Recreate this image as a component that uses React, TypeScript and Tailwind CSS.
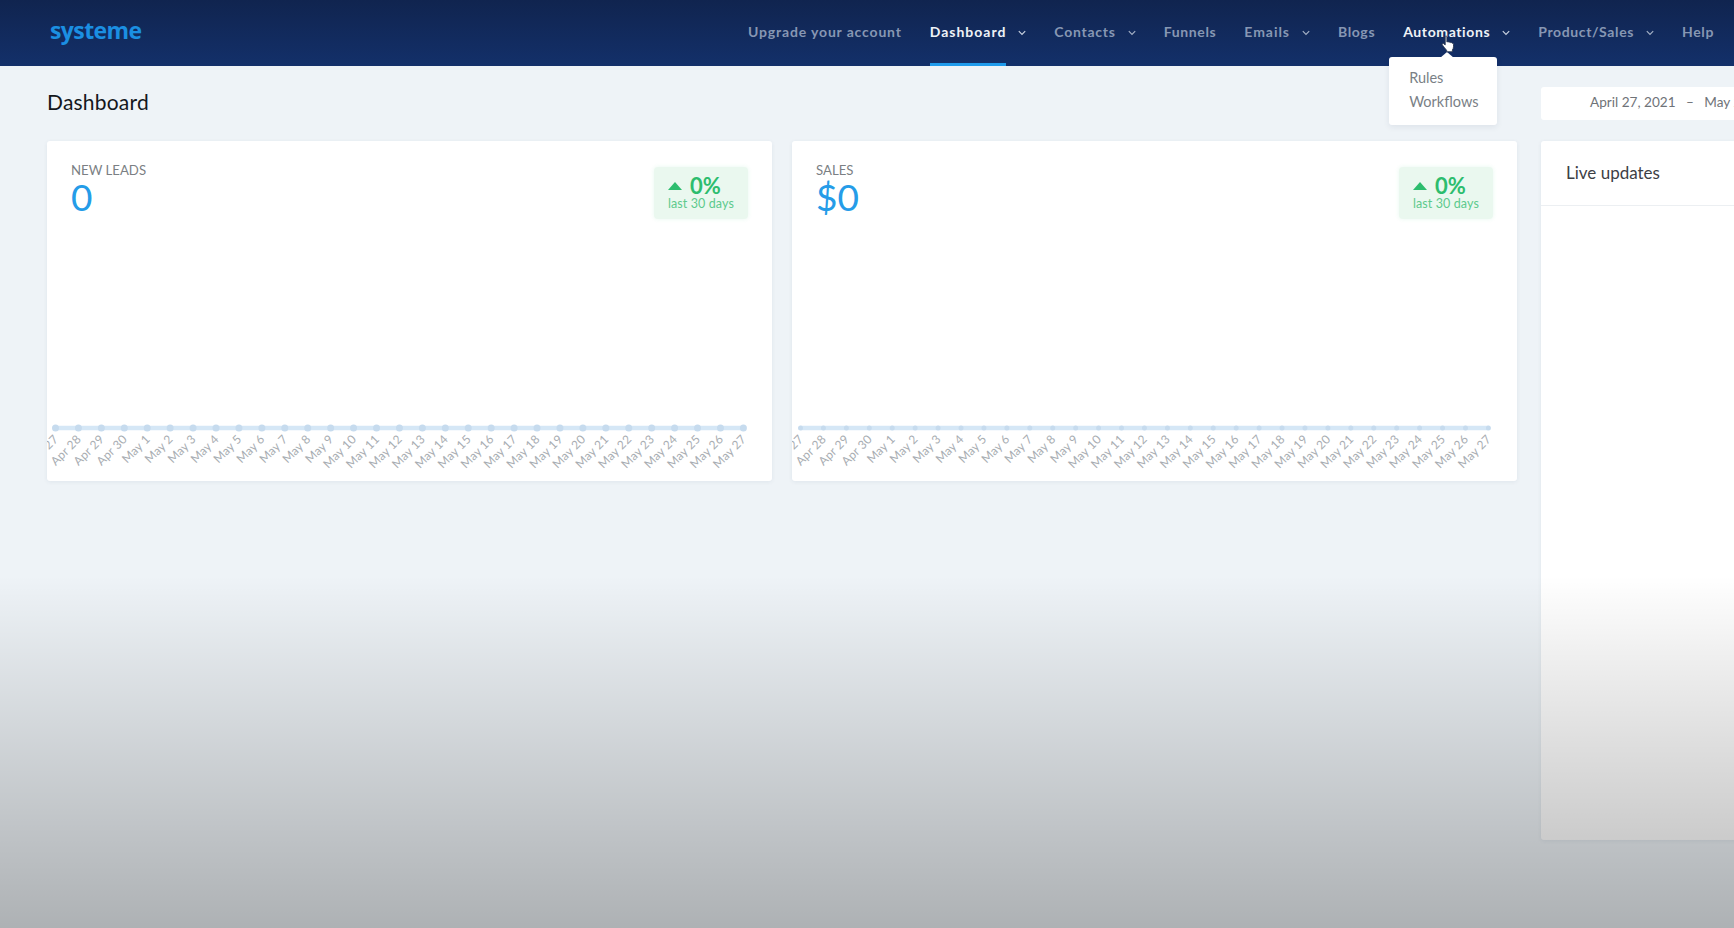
import React from "react";

const SANS = "font-['Lato','Noto_Sans',sans-serif]";

function Chevron() {
  return (
    <svg width="8" height="6" viewBox="0 0 8 6" className="ml-3" fill="none">
      <path d="M0.8 1.2 L4 4.4 L7.2 1.2" stroke="currentColor" strokeWidth="1.2" />
    </svg>
  );
}

const NAV: { label: string; track: string; chevron?: boolean; active?: boolean; open?: boolean }[] = [
  { label: "Upgrade your account", track: "tracking-[0.84px]" },
  { label: "Dashboard", track: "tracking-[0.98px]", chevron: true, active: true },
  { label: "Contacts", track: "tracking-[0.75px]", chevron: true },
  { label: "Funnels", track: "tracking-[0.62px]" },
  { label: "Emails", track: "tracking-[0.95px]", chevron: true },
  { label: "Blogs", track: "tracking-[0.62px]" },
  { label: "Automations", track: "tracking-[0.62px]", chevron: true, open: true },
  { label: "Product/Sales", track: "tracking-[0.62px]", chevron: true },
  { label: "Help", track: "tracking-[0.62px]" },
];

function Header() {
  return (
    <header className="h-[66px] shrink-0 flex items-center justify-between pl-[50px] pr-5 bg-gradient-to-b from-[#10244f] to-[#13306a]">
      <div className="font-['Open_Sans',sans-serif] font-bold text-[23px] leading-none tracking-[-0.6px] text-[#1b8fe2] -mt-[6px]">
        systeme
      </div>
      <nav className="flex h-full items-stretch gap-[28px]">
        {NAV.map((n) => (
          <div key={n.label} className="relative flex items-center">
            <div className="relative flex h-full items-center">
              <span
                className={`-mt-[4px] text-[14px] font-bold ${n.track} ${
                  n.active || n.open ? "text-[#eef2f7]" : "text-[#8797b3]"
                }`}
              >
                {n.label}
              </span>
              {n.active && <span className="absolute left-0 right-0 bottom-0 h-[3px] bg-[#1f9bec]" />}
            </div>
            {n.chevron && (
              <span className={n.active || n.open ? "text-[#c9d2e0]" : "text-[#a4b0c5]"}>
                <Chevron />
              </span>
            )}
            {n.open && <Dropdown />}
          </div>
        ))}
      </nav>
    </header>
  );
}

function Dropdown() {
  return (
    <>
      <div className="absolute z-20 left-[-14px] top-[57px] w-[108px] h-[68px] rounded-[3px] bg-white shadow-[0_2px_6px_rgba(20,40,80,0.08)] pl-5 pt-[11px] flex flex-col gap-[4px] text-[14.5px] leading-[20px] text-[#7a7f86] font-normal">
        <span className="absolute left-[58px] -top-[5px] -ml-[7px] w-0 h-0 border-x-[7px] border-x-transparent border-b-[6px] border-b-white" />
        <span>Rules</span>
        <span>Workflows</span>
      </div>
      <svg
        className="absolute z-30 left-[38px] top-[35px]"
        width="15"
        height="18"
        viewBox="0 0 15 18"
      >
        <path
          d="M4.2 1.8c0-1.1 1.7-1.1 1.7 0V7l.3-.1c.6-.4 1.4-.2 1.7.3.6-.3 1.3-.2 1.7.4.7-.3 1.4 0 1.6.7.7-.2 1.3.3 1.3 1v2.5c0 1.2-.5 2.2-1.1 3.2v1.8H5.6v-1.6C4.3 14 2.7 11.6 1.4 10c-.8-1 .4-2.1 1.4-1.3l1.4 1.2V1.8z"
          fill="#ffffff"
          stroke="#26344f"
          strokeWidth="0.9"
        />
      </svg>
    </>
  );
}

const DATES = [
  "Apr 27", "Apr 28", "Apr 29", "Apr 30",
  ...Array.from({ length: 27 }, (_, i) => `May ${i + 1}`),
];

function Chart({ dotR }: { dotR: number }) {
  const x0 = 8.5;
  const step = 22.93;
  const y = 27;
  return (
    <svg width="725" height="72" className="block mt-auto mb-[8px] shrink-0">
      <line x1={x0} x2={x0 + step * 30} y1={y} y2={y} stroke="#d5e7f6" strokeWidth="4.5" />
      {DATES.map((d, i) => (
        <circle key={d} cx={x0 + step * i} cy={y} r={dotR} fill="#c6dbee" />
      ))}
      {DATES.map((d, i) => {
        const x = x0 + step * i + 3.5;
        const ty = y + 12;
        return (
          <text
            key={d}
            x={x}
            y={ty}
            textAnchor="end"
            transform={`rotate(-45 ${x} ${ty})`}
            fontFamily="Lato, sans-serif"
            fontSize="12"
            letterSpacing="0.2"
            fill="#a8adb2"
          >
            {d}
          </text>
        );
      })}
    </svg>
  );
}

function StatCard({ title, value, dotR }: { title: string; value: string; dotR: number }) {
  return (
    <section className="h-[340px] bg-white rounded-[3px] shadow-[0_1px_4px_rgba(30,60,100,0.07)] flex flex-col overflow-hidden">
      <div className="flex justify-between pl-6 pr-6 pt-[21px]">
        <div>
          <div className="text-[13.2px] leading-[16px] text-[#7b7f84]">{title}</div>
          <div className="text-[37px] leading-[37px] text-[#259ce8] font-normal">{value}</div>
        </div>
        <div className="mt-[5px] w-[94px] h-[52px] rounded-[4px] bg-[#eaf8ef] shadow-[0_0_4px_rgba(60,200,120,0.12)] pl-[14px] pt-[8px]">
          <div className="flex items-center gap-2 h-[22px]">
            <span className="w-0 h-0 border-x-[7px] border-x-transparent border-b-[8px] border-b-[#2dbd6e]" />
            <span className="text-[22px] leading-none font-bold text-[#2dbd6e]">0%</span>
          </div>
          <div className="text-[12.5px] leading-[14px] text-[#5dca8d] tracking-[0.1px]">last 30 days</div>
        </div>
      </div>
      <Chart dotR={dotR} />
    </section>
  );
}

export default function App() {
  return (
    <div className={`relative w-full h-screen overflow-hidden bg-[#eef3f7] flex flex-col ${SANS}`}>
      <Header />
      <main className="flex flex-1 min-h-0 pl-[47px] w-[2000px]">
        <div className="w-[1470px] shrink-0">
          <h1 className="h-[75px] pb-[5px] flex items-center text-[21px] leading-none font-normal text-[#14171c] tracking-[0.2px]">
            Dashboard
          </h1>
          <div className="grid grid-cols-2 gap-5">
            <StatCard title="NEW LEADS" value="0" dotR={3.5} />
            <StatCard title="SALES" value="$0" dotR={2.5} />
          </div>
        </div>
        <aside className="ml-6 w-[420px] shrink-0">
          <div className="mt-[21px] h-[33px] bg-white rounded-[3px] flex items-center pl-[49px] pb-[2px] text-[13.6px] text-[#6f7378] whitespace-pre">
            April 27, 2021   –   May 27, 2021
          </div>
          <div className="mt-[21px] h-[699px] bg-white rounded-[3px] shadow-[0_1px_4px_rgba(30,60,100,0.07)]">
            <div className="h-[65px] flex items-center pl-[25px] text-[17px] text-[#3d4045] border-b border-[#eceff2]">
              Live updates
            </div>
          </div>
        </aside>
      </main>
      <div className="absolute inset-0 z-40 pointer-events-none bg-[linear-gradient(to_bottom,transparent_62%,rgba(0,0,0,0.27)_100%)]" />
    </div>
  );
}
